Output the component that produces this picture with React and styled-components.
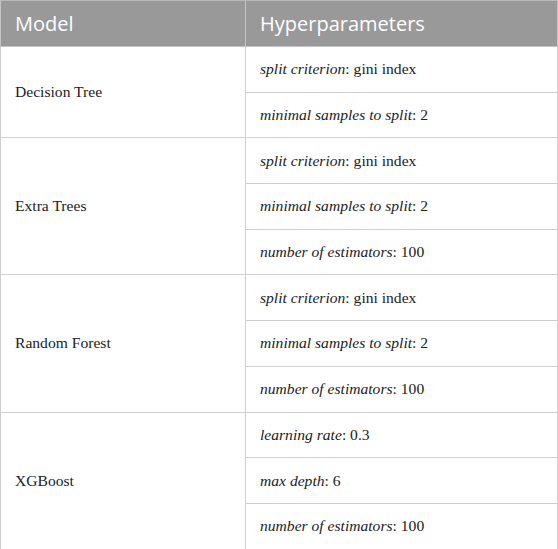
import styled, { createGlobalStyle } from 'styled-components';

const GlobalStyle = createGlobalStyle`
	html, body {
		margin: 0;
		padding: 0;
		background: #ffffff;
	}
`;

const models = [
	{
		name: 'Decision Tree',
		params: [
			['split criterion', 'gini index'],
			['minimal samples to split', '2'],
		],
	},
	{
		name: 'Extra Trees',
		params: [
			['split criterion', 'gini index'],
			['minimal samples to split', '2'],
			['number of estimators', '100'],
		],
	},
	{
		name: 'Random Forest',
		params: [
			['split criterion', 'gini index'],
			['minimal samples to split', '2'],
			['number of estimators', '100'],
		],
	},
	{
		name: 'XGBoost',
		params: [
			['learning rate', '0.3'],
			['max depth', '6'],
			['number of estimators', '100'],
		],
	},
];

const App = () => {
	return (
		<>
			<GlobalStyle />
			<Table>
				<thead>
					<tr>
						<HeadCell $width={245}>Model</HeadCell>
						<HeadCell>Hyperparameters</HeadCell>
					</tr>
				</thead>
				<tbody>
					{models.map(model =>
						model.params.map(([key, value], i) => (
							<tr key={model.name + key}>
								{i === 0 && (
									<ModelCell rowSpan={model.params.length}>
										{model.name}
									</ModelCell>
								)}
								<ParamCell>
									<em>{key}</em>: {value}
								</ParamCell>
							</tr>
						))
					)}
				</tbody>
			</Table>
		</>
	);
};

const Table = styled.table`
	width: 558px;
	border-collapse: collapse;
	table-layout: fixed;
	border: 1px solid #b8b8b8;
`;

const HeadCell = styled.th`
	width: ${props => (props.$width ? `${props.$width}px` : 'auto')};
	height: 46px;
	padding: 0 14px;
	box-sizing: border-box;
	background: #999999;
	color: #ffffff;
	font-family: 'Open Sans', sans-serif;
	font-weight: 400;
	font-size: 20px;
	text-align: left;
	border: 1px solid #c4c4c4;
	border-top: none;
`;

const ModelCell = styled.td`
	padding: 0 14px;
	font-family: 'Liberation Serif', serif;
	font-size: 15.6px;
	color: #222222;
	border: 1px solid #cfcfcf;
	vertical-align: middle;
`;

const ParamCell = styled.td`
	height: 45.7px;
	padding: 0 14px;
	box-sizing: border-box;
	font-family: 'Liberation Serif', serif;
	font-size: 15.6px;
	color: #222222;
	border: 1px solid #cfcfcf;

	em {
		font-style: italic;
	}
`;

export default App;
